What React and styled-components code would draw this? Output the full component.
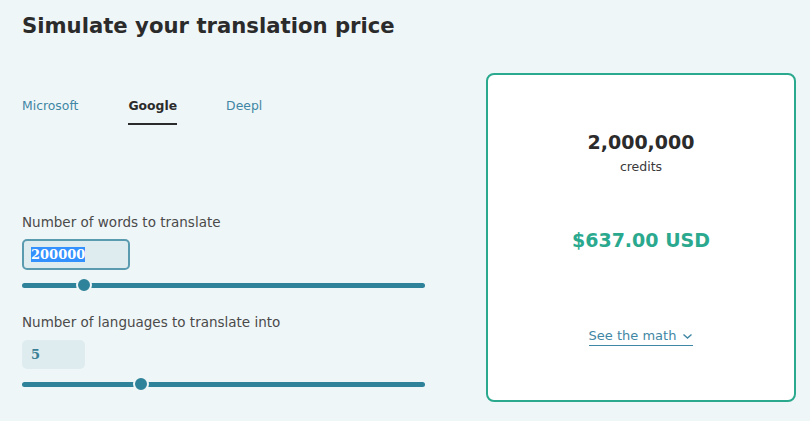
import React, {useState, useEffect, useRef} from 'react'
import styled, {createGlobalStyle} from 'styled-components'

const GlobalStyle = createGlobalStyle`
    html, body {
        margin: 0;
        padding: 0;
        background: #eff6f8;
        font-family: "DejaVu Sans", Verdana, sans-serif;
    }
`

const Page = styled.div`
    width: 810px;
    height: 421px;
    box-sizing: border-box;
    padding: 12px 14px 0 22px;
    overflow: hidden;
`

const Title = styled.h1`
    margin: 0;
    font-size: 21.2px;
    font-weight: bold;
    color: #2b2b2b;
    line-height: 28px;
`

const Body = styled.div`
    display: flex;
    justify-content: space-between;
    margin-top: 33px;
`

const Controls = styled.div`
    width: 403px;
    display: flex;
    flex-direction: column;
`

const Tabs = styled.div`
    display: flex;
    margin-top: 25px;
`

const Tab = styled.button`
    background: none;
    border: none;
    padding: 0 0 10px;
    margin-right: ${p => p.$gap}px;
    font-family: inherit;
    font-size: 12.4px;
    font-weight: ${p => p.$active ? 'bold' : 'normal'};
    color: ${p => p.$active ? '#2b2b2b' : '#3f87a4'};
    border-bottom: 2px solid ${p => p.$active ? '#2b2b2b' : 'transparent'};
    cursor: pointer;
`

const Field = styled.div`
    display: flex;
    flex-direction: column;
    margin-top: ${p => p.$top}px;
`

const Label = styled.label`
    font-size: 13.5px;
    color: #4a4a4a;
    line-height: 16px;
`

const NumberBox = styled.input`
    margin-top: ${p => p.$focused ? 9 : 10}px;
    box-sizing: border-box;
    width: ${p => p.$width}px;
    height: ${p => p.$focused ? 31 : 29}px;
    padding: 0 ${p => p.$focused ? 7 : 9}px;
    border: ${p => p.$focused ? '2px solid #5a9bb0' : 'none'};
    border-radius: 5px;
    background: #deecef;
    font-family: "DejaVu Serif", Georgia, serif;
    font-weight: bold;
    font-size: 13px;
    line-height: 27px;
    color: #3a7f95;
    outline: none;
    &::selection {
        background: #3390ff;
        color: #fff;
    }
`

const Range = styled.input`
    -webkit-appearance: none;
    appearance: none;
    width: 403px;
    height: 16px;
    margin: ${p => p.$top}px 0 0;
    background: transparent;
    &::-webkit-slider-runnable-track {
        height: 5px;
        border-radius: 3px;
        background: #2e8299;
    }
    &::-webkit-slider-thumb {
        -webkit-appearance: none;
        width: 16px;
        height: 16px;
        margin-top: -5.5px;
        border-radius: 50%;
        background: #2e8299;
        border: 2px solid #eff6f8;
        box-sizing: border-box;
    }
`

const Card = styled.div`
    box-sizing: border-box;
    width: 310px;
    height: 329px;
    border: 2px solid #2aa98e;
    border-radius: 8px;
    background: #fff;
    display: flex;
    flex-direction: column;
    align-items: center;
    padding-top: 55px;
`

const Credits = styled.div`
    font-size: 19px;
    font-weight: bold;
    color: #2b2b2b;
    line-height: 24px;
`

const Unit = styled.div`
    font-size: 12.5px;
    color: #3a3a3a;
    margin-top: 5px;
`

const Price = styled.div`
    margin-top: 55px;
    font-size: 19px;
    font-weight: bold;
    color: #2aa98e;
`

const MathLink = styled.a`
    margin-top: 77px;
    display: flex;
    align-items: center;
    gap: 6px;
    font-size: 13px;
    color: #3f87a4;
    text-decoration: none;
    border-bottom: 1px solid #3f87a4;
    padding-bottom: 2px;
    cursor: pointer;
`

const Chevron = () => (
    <svg width="11" height="10" viewBox="0 0 11 10" fill="none" stroke="#3f87a4" strokeWidth="1.4">
        <path d="M1.5 3.5 L5.5 7 L9.5 3.5" />
    </svg>
)

const tabs = [
    {name: 'Microsoft', gap: 50},
    {name: 'Google', gap: 49},
    {name: 'Deepl', gap: 0},
]

export default function App() {
    const [provider, setProvider] = useState('Google')
    const [words, setWords] = useState(200000)
    const [langs, setLangs] = useState(5)
    const wordsRef = useRef(null)

    // keep the number highlighted as in the selected state
    useEffect(() => {
        if (wordsRef.current) {
            wordsRef.current.focus()
            wordsRef.current.select()
        }
    }, [])

    const credits = words * langs * 2
    const price = credits / 1000000 * 318.5

    return (
        <Page>
            <GlobalStyle />
            <Title>Simulate your translation price</Title>
            <Body>
                <Controls>
                    <Tabs>
                        {tabs.map(t => (
                            <Tab key={t.name} $gap={t.gap} $active={provider === t.name}
                                onClick={() => setProvider(t.name)}>
                                {t.name}
                            </Tab>
                        ))}
                    </Tabs>
                    <Field $top={89}>
                        <Label>Number of words to translate</Label>
                        <NumberBox ref={wordsRef} $width={108} $focused value={words}
                            onChange={e => setWords(Number(e.target.value) || 0)} />
                        <Range type="range" $top={7} min={0} max={1440000} step={1000} value={words}
                            onChange={e => setWords(Number(e.target.value))} />
                    </Field>
                    <Field $top={21}>
                        <Label>Number of languages to translate into</Label>
                        <NumberBox $width={63} value={langs}
                            onChange={e => setLangs(Number(e.target.value) || 0)} />
                        <Range type="range" $top={7} min={1} max={15} value={langs}
                            onChange={e => setLangs(Number(e.target.value))} />
                    </Field>
                </Controls>
                <Card>
                    <Credits>{credits.toLocaleString('en-US')}</Credits>
                    <Unit>credits</Unit>
                    <Price>${price.toFixed(2)} USD</Price>
                    <MathLink>See the math <Chevron /></MathLink>
                </Card>
            </Body>
        </Page>
    )
}
